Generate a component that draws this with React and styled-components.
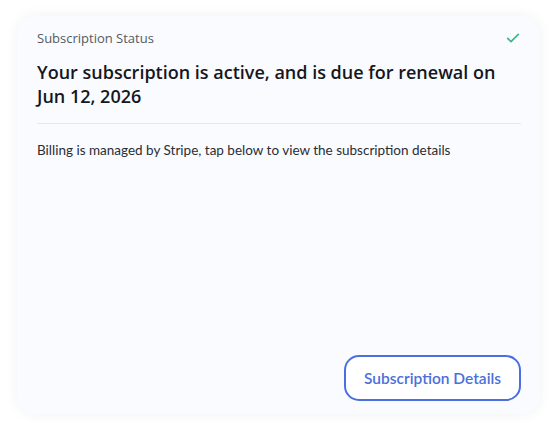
import React from 'react';
import styled, { createGlobalStyle } from 'styled-components';

const GlobalStyle = createGlobalStyle`
  html, body {
    margin: 0;
    padding: 0;
    background: #ffffff;
  }
  body {
    font-family: Lato, "Noto Sans", sans-serif;
  }
`;

const Page = styled.div`
  width: 555px;
  height: 432px;
  padding: 16px 15px 18px 17px;
  box-sizing: border-box;
`;

const Card = styled.section`
  height: 100%;
  box-sizing: border-box;
  display: flex;
  flex-direction: column;
  padding: 14px 19px 13px 20px;
  background: #f9fbff;
  border-radius: 18px;
  box-shadow: 0 0 14px rgba(20, 30, 60, 0.06);
`;

const Header = styled.div`
  display: flex;
  justify-content: space-between;
  align-items: center;
  height: 16px;
`;

const Label = styled.span`
  font-family: "Open Sans", sans-serif;
  font-size: 13px;
  color: #555a63;
`;

const Title = styled.h2`
  margin: 14px 0 0;
  font-family: "Open Sans", sans-serif;
  font-size: 18px;
  line-height: 24px;
  font-weight: 600;
  color: #15171c;
`;

const Divider = styled.hr`
  margin: 15px 0 0;
  border: none;
  height: 1px;
  background: #e4e7f3;
`;

const Body = styled.p`
  margin: 17px 0 0;
  font-size: 13.5px;
  line-height: 18px;
  color: #2a2d33;
`;

const Actions = styled.div`
  margin-top: auto;
  display: flex;
  justify-content: flex-end;
`;

const OutlineButton = styled.button`
  height: 46px;
  padding: 0 18px;
  border: 2px solid #4b6fe0;
  border-radius: 15px;
  background: #ffffff;
  color: #4b6fdb;
  font-family: Lato, "Noto Sans", sans-serif;
  font-size: 15.5px;
  font-weight: 600;
  cursor: pointer;
`;

const Check = () => (
  <svg width="16" height="16" viewBox="0 0 24 24" fill="none" stroke="#3fb581" strokeWidth="2.4" strokeLinecap="round" strokeLinejoin="round">
    <path d="M4 12.5l5 5L20 6.5" />
  </svg>
);

export default function App() {
  return (
    <>
      <GlobalStyle />
      <Page>
        <Card>
          <Header>
            <Label>Subscription Status</Label>
            <Check />
          </Header>
          <Title>Your subscription is active, and is due for renewal on Jun 12, 2026</Title>
          <Divider />
          <Body>Billing is managed by Stripe, tap below to view the subscription details</Body>
          <Actions>
            <OutlineButton>Subscription Details</OutlineButton>
          </Actions>
        </Card>
      </Page>
    </>
  );
}
